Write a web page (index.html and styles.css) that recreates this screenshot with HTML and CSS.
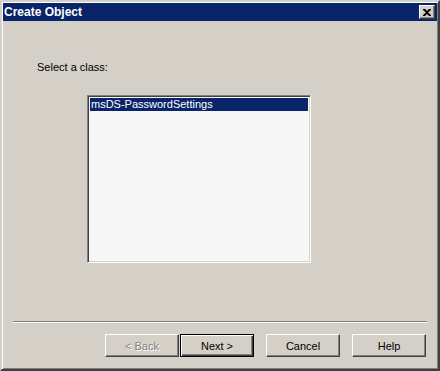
FILE: index.html
```html
<!DOCTYPE html>
<html>
<head>
    <meta charset="UTF-8">
    <meta name="viewport" content="width=device-width, initial-scale=1.0">
    <link rel="stylesheet" href="styles.css">
</head>
<body>
    <div class="window">
        <div class="titlebar">
            <span class="title">Create Object</span>
            <button class="close" type="button">
                <svg width="8" height="7" viewBox="0 0 8 7">
                    <path d="M0 0h2l2 2 2-2h2v1L5 3.5 8 6v1H6L4 5 2 7H0V6l3-2.5L0 1z" fill="#000"/>
                </svg>
            </button>
        </div>

        <div class="content">
            <div class="label">Select a class:</div>

            <div class="listbox">
                <div class="item selected">msDS-PasswordSettings</div>
            </div>

            <div class="separator"></div>

            <div class="buttons">
                <button class="btn disabled" type="button">&lt; Back</button>
                <button class="btn default" type="button">Next &gt;</button>
                <button class="btn" type="button">Cancel</button>
                <button class="btn" type="button">Help</button>
            </div>
        </div>
    </div>
</body>
</html>
```

FILE: styles.css
```css
html, body {
    margin: 0;
    padding: 0;
}
body {
    font-family: "Liberation Sans", Arial, sans-serif;
    font-size: 11px;
    color: #000;
    background-color: #d4d0c8;
}
.window {
    width: 440px;
    height: 371px;
    box-sizing: border-box;
    border: 2px solid;
    border-color: #d4d0c8 #404040 #404040 #d4d0c8;
    box-shadow: inset 1px 1px #fff, inset -1px -1px #808080;
    padding: 1px;
    background-color: #d4d0c8;
}
.titlebar {
    height: 18px;
    background-color: #0a246a;
    display: flex;
    align-items: center;
    justify-content: space-between;
    padding: 0 2px 0 1px;
}
.title {
    color: #fff;
    font-weight: bold;
    font-size: 12px;
}
.close {
    width: 16px;
    height: 14px;
    padding: 0;
    border: 1px solid;
    border-color: #fff #404040 #404040 #fff;
    box-shadow: inset -1px -1px #808080;
    background-color: #d4d0c8;
    display: flex;
    align-items: center;
    justify-content: center;
}
.content {
    padding: 40px 0 0 0;
}
.label {
    padding-left: 34px;
    line-height: 13px;
}
.listbox {
    margin: 21px 0 0 84px;
    width: 224px;
    height: 168px;
    box-sizing: border-box;
    border: 1px solid;
    border-color: #808080 #fff #fff #808080;
    box-shadow: inset 1px 1px #404040, inset -1px -1px #d4d0c8;
    padding: 2px 2px;
    background-color: #f7f7f7;
}
.item {
    line-height: 13px;
    padding-left: 1px;
}
.item.selected {
    background-color: #0a246a;
    color: #fff;
}
.separator {
    margin: 58px 10px 0 10px;
    border-top: 1px solid #808080;
    border-bottom: 1px solid #fff;
}
.buttons {
    display: flex;
    justify-content: flex-end;
    padding: 11px 11px 0 0;
}
.btn {
    width: 74px;
    height: 23px;
    margin-left: 12px;
    padding: 0;
    font-family: "Liberation Sans", Arial, sans-serif;
    font-size: 11px;
    color: #000;
    background-color: #d4d0c8;
    border: 1px solid;
    border-color: #fff #404040 #404040 #fff;
    box-shadow: inset -1px -1px #808080;
}
.btn.disabled {
    color: #808080;
    text-shadow: 1px 1px #fff;
    margin-left: 0;
}
.btn.default {
    margin-left: 1px;
    border: 1px solid #000;
    box-shadow: inset 1px 1px #fff, inset -1px -1px #404040, inset -2px -2px #808080;
}
```
